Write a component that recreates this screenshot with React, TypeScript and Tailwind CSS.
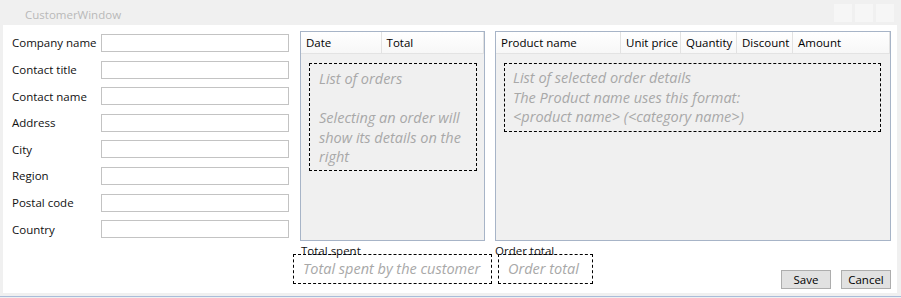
import React from "react";

const font = { fontFamily: '"Open Sans", "Noto Sans", sans-serif' };

const labels = [
  "Company name",
  "Contact title",
  "Contact name",
  "Address",
  "City",
  "Region",
  "Postal code",
  "Country",
];

function Header({ cols }: { cols: { label: string; w: number }[] }) {
  return (
    <div className="flex h-[22px] border-b border-[#e3e3e3] bg-gradient-to-b from-white to-[#f7f7f7]">
      {cols.map((c, i) => (
        <div
          key={i}
          className="flex items-center border-r border-[#e2e2e2] pl-[5px] text-[11.5px] text-black whitespace-nowrap overflow-hidden"
          style={{ width: c.w }}
        >
          {c.label}
        </div>
      ))}
      <div className="flex-1" />
    </div>
  );
}

export default function App() {
  return (
    <div className="w-[901px] h-[298px] bg-[#f0f0f0] flex flex-col overflow-hidden" style={font}>
      {/* title bar */}
      <div className="h-[25px] flex items-start shrink-0">
        <div className="pl-[25px] pt-[7px] text-[11.5px] leading-[16px] text-[#b9b9b9]">CustomerWindow</div>
        <div className="flex-1" />
        <div className="flex gap-[3px] pt-[4px] pr-[7px]">
          <div className="w-[18px] h-[18px] bg-[#f6f6f6]" />
          <div className="w-[18px] h-[18px] bg-[#f6f6f6]" />
          <div className="w-[18px] h-[18px] bg-[#f6f6f6]" />
        </div>
      </div>
      {/* content */}
      <div className="ml-[3px] mr-[4px] h-[268px] bg-white flex flex-col shrink-0">
        <div className="flex pt-[6px] h-[216px]">
          {/* form */}
          <div className="ml-[9px] w-[277px] pt-[3px] flex flex-col gap-[8.6px]">
            {labels.map((l) => (
              <div key={l} className="flex items-center h-[18px]">
                <div className="w-[89px] text-[11.5px] text-[#111] whitespace-nowrap">{l}</div>
                <div className="w-[188px] h-[18px] border border-[#c3c3c3] bg-white" />
              </div>
            ))}
          </div>
          {/* orders */}
          <div className="ml-[11px] w-[185px] h-[210px] border border-[#a7b4c7] bg-[#f0f0f0] flex flex-col">
            <Header cols={[{ label: "Date", w: 81 }, { label: "Total", w: 103 }]} />
            <div className="ml-[8px] mt-[9px] w-[168px] h-[108px] border border-dashed border-black px-[9px] pt-[5px] text-[14.5px] leading-[19.5px] italic text-[#a8a8a8]">
              List of orders
              <br />
              <br />
              Selecting an order will show its details on the right
            </div>
          </div>
          {/* details */}
          <div className="ml-[10px] w-[396px] h-[210px] border border-[#a7b4c7] bg-[#f0f0f0] flex flex-col">
            <Header
              cols={[
                { label: "Product name", w: 125 },
                { label: "Unit price", w: 60 },
                { label: "Quantity", w: 56 },
                { label: "Discount", w: 56 },
                { label: "Amount", w: 97 },
              ]}
            />
            <div className="ml-[8px] mt-[9px] w-[377px] h-[69px] border border-dashed border-black px-[8px] pt-[4px] text-[14.5px] leading-[19.5px] italic text-[#a8a8a8] whitespace-nowrap">
              List of selected order details
              <br />
              The Product name uses this format:
              <br />
              {"<product name> (<category name>)"}
            </div>
          </div>
        </div>
        {/* bottom */}
        <div className="flex">
          <div className="ml-[290px] w-[199px] flex flex-col">
            <div className="pl-[8px] pt-[3px] text-[11.5px] leading-[14px] text-[#111] h-[13px] relative z-10 whitespace-nowrap">Total spent</div>
            <div className="h-[30px] border border-dashed border-black pl-[9px] flex items-center text-[14.5px] italic text-[#a8a8a8] whitespace-nowrap">
              Total spent by the customer
            </div>
          </div>
          <div className="ml-[6px] w-[95px] flex flex-col">
            <div className="-ml-[3px] pt-[3px] text-[11.5px] leading-[14px] text-[#111] h-[13px] relative z-10 whitespace-nowrap">Order total</div>
            <div className="h-[30px] border border-dashed border-black pl-[9px] flex items-center text-[14.5px] italic text-[#a8a8a8] whitespace-nowrap">
              Order total
            </div>
          </div>
          <div className="flex-1" />
          <div className="flex gap-[10px] pt-[29px] pr-[6px]">
            <button className="w-[50px] h-[19px] border border-[#adadad] bg-[#e1e1e1] text-[11.5px] leading-[16px] text-black">Save</button>
            <button className="w-[50px] h-[19px] border border-[#adadad] bg-[#e1e1e1] text-[11.5px] leading-[16px] text-black">Cancel</button>
          </div>
        </div>
      </div>
      <div className="h-[3px] shrink-0" />
      <div className="h-[1px] bg-[#a9bcd9] shrink-0" />
    </div>
  );
}
